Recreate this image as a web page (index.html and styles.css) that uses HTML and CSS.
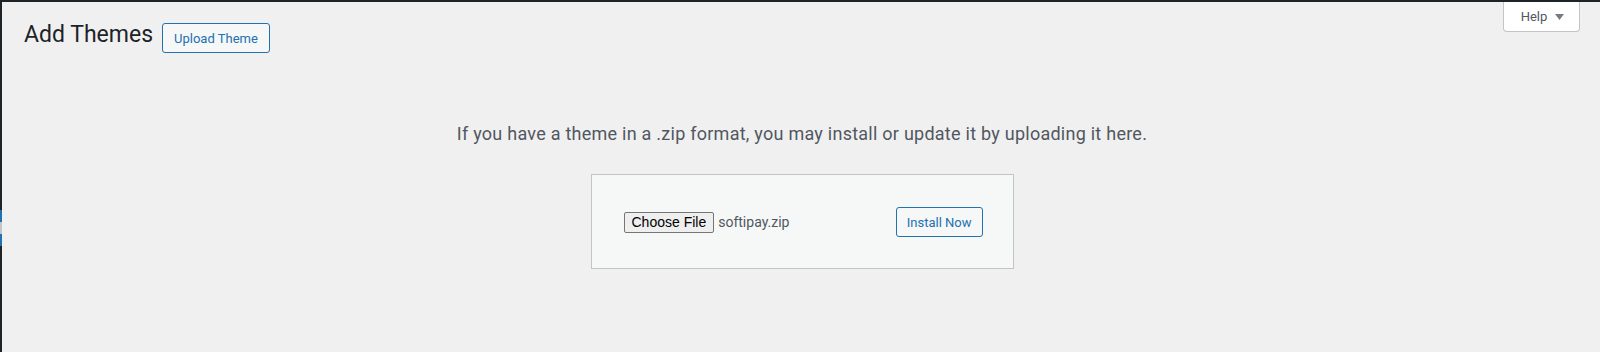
FILE: index.html
```html
<!DOCTYPE html>
<html lang="en">
<head>
    <meta charset="UTF-8">
    <meta name="viewport" content="width=device-width, initial-scale=1.0">
    <title>Add Themes</title>
    <link rel="stylesheet" href="styles.css">
</head>
<body>

    <div class="admin-bar"></div>

    <div class="layout">

        <div class="menu-edge">
            <div class="edge dark top"></div>
            <div class="edge blue"></div>
            <div class="edge light"></div>
            <div class="edge blue"></div>
            <div class="edge dark rest"></div>
        </div>

        <div class="content">

            <div class="page-header">
                <h1>Add Themes</h1>
                <button class="page-action">Upload Theme</button>
                <button class="help-link">
                    Help
                    <svg width="9" height="6" viewBox="0 0 9 6"><path d="M0 0h9L4.5 6z" fill="#787c82"/></svg>
                </button>
            </div>

            <div class="upload-theme">
                <p class="install-help">If you have a theme in a .zip format, you may install or update it by uploading it here.</p>

                <form class="upload-form">
                    <div class="file-field">
                        <span class="file-button">Choose File</span>
                        <span class="file-name">softipay.zip</span>
                    </div>
                    <button type="button" class="install-button">Install Now</button>
                </form>
            </div>

        </div>
    </div>

</body>
</html>
```

FILE: styles.css
```css
body {
    margin: 0;
    height: 352px;
    overflow: hidden;
    background: #f0f0f1;
    color: #3c434a;
    font-family: Roboto, "Noto Sans", sans-serif;
    font-size: 13px;
}

.admin-bar {
    height: 2px;
    background: #1d2327;
}

.layout {
    display: flex;
    height: 350px;
}

.menu-edge {
    width: 2px;
    display: flex;
    flex-direction: column;
}

.edge.dark {
    background: #1d2327;
}

.edge.top {
    height: 208px;
}

.edge.blue {
    height: 12px;
    background: #2271b1;
}

.edge.light {
    height: 12px;
    background: #c3c4c7;
}

.edge.rest {
    flex: 1;
}

.content {
    flex: 1;
    padding: 0 20px 0 22px;
}

.page-header {
    display: flex;
    align-items: flex-start;
}

h1 {
    margin: 18px 0 0;
    font-size: 23px;
    font-weight: 400;
    line-height: 30px;
    color: #1d2327;
}

button {
    font-family: inherit;
    cursor: pointer;
}

.page-action,
.install-button {
    height: 30px;
    padding: 0 10px;
    border: 1px solid #2271b1;
    border-radius: 3px;
    background: #f6f7f7;
    color: #2271b1;
    font-size: 13px;
}

.page-action {
    margin: 21px 0 0 9px;
    padding: 0 11px;
}

.help-link {
    margin-left: auto;
    width: 77px;
    height: 30px;
    display: flex;
    align-items: center;
    justify-content: center;
    gap: 8px;
    padding: 0 0 0 2px;
    border: 1px solid #c3c4c7;
    border-top: none;
    border-radius: 0 0 4px 4px;
    background: #fff;
    color: #50575e;
    font-size: 13px;
}

.upload-theme {
    text-align: center;
    padding-top: 67px;
}

.install-help {
    margin: 0 0 27px;
    font-size: 18px;
    line-height: 27px;
    letter-spacing: 0.25px;
    color: #50575e;
}

.upload-form {
    box-sizing: border-box;
    width: 423px;
    display: inline-flex;
    justify-content: space-between;
    align-items: center;
    padding: 32px 30px 31px 32px;
    border: 1px solid #c3c4c7;
    background: #f6f7f7;
}

.file-field {
    display: flex;
    align-items: center;
    gap: 4px;
}

.file-button {
    padding: 1px 7px;
    border: 1px solid #767676;
    border-radius: 2px;
    background: #efefef;
    color: #000;
    font-family: "Liberation Sans", Arial, sans-serif;
    font-size: 14px;
    line-height: 17px;
}

.file-name {
    font-size: 14px;
    color: #50575e;
}
```
